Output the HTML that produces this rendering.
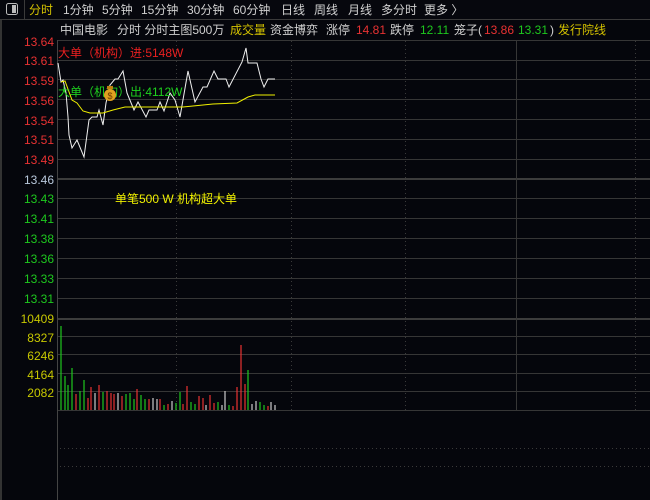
<!DOCTYPE html>
<html><head><meta charset="utf-8"><style>
html,body{margin:0;padding:0;background:#05060c;width:650px;height:500px;overflow:hidden}
svg{display:block}
text{font-family:"Liberation Sans","Noto Sans CJK SC",sans-serif;font-size:12px}
</style></head><body>
<svg width="650" height="500" viewBox="0 0 650 500" xmlns="http://www.w3.org/2000/svg">
<rect width="650" height="500" fill="#05060c"/>
<!-- top bar -->
<rect x="0" y="0" width="650" height="19" fill="#06070d"/>
<line x1="0" y1="19.5" x2="650" y2="19.5" stroke="#3a3a3a"/>
<line x1="24.5" y1="0" x2="24.5" y2="19" stroke="#3a3a3a"/>
<rect x="6.5" y="3.5" width="11" height="11" rx="2" fill="none" stroke="#bbb"/>
<rect x="12" y="5" width="4" height="8" fill="#bbb"/>
<text x="29" y="14" fill="#d4c200">分时</text>
<text x="63" y="14" fill="#d0d0d0">1分钟</text>
<text x="102" y="14" fill="#d0d0d0">5分钟</text>
<text x="141" y="14" fill="#d0d0d0">15分钟</text>
<text x="187" y="14" fill="#d0d0d0">30分钟</text>
<text x="233" y="14" fill="#d0d0d0">60分钟</text>
<text x="281" y="14" fill="#d0d0d0">日线</text>
<text x="314" y="14" fill="#d0d0d0">周线</text>
<text x="348" y="14" fill="#d0d0d0">月线</text>
<text x="381" y="14" fill="#d0d0d0">多分时</text>
<text x="424" y="14" fill="#d0d0d0">更多 〉</text>
<!-- left border -->
<rect x="0" y="20" width="2" height="480" fill="#333"/>
<line x1="57.5" y1="40" x2="57.5" y2="500" stroke="#444"/>
<!-- header row -->
<text x="60" y="34" fill="#d0d0d0">中国电影</text>
<text x="117" y="34" fill="#d0d0d0">分时 分时主图500万</text>
<text x="230" y="34" fill="#d4c200">成交量</text>
<text x="270" y="34" fill="#d0d0d0">资金博弈</text>
<text x="326" y="34" fill="#d0d0d0">涨停</text>
<text x="356" y="34" fill="#e83232">14.81</text>
<text x="390" y="34" fill="#d0d0d0">跌停</text>
<text x="420" y="34" fill="#1ec81e">12.11</text>
<text x="454" y="34" fill="#d0d0d0">笼子(</text>
<text x="484" y="34" fill="#e83232">13.86</text>
<text x="518" y="34" fill="#1ec81e">13.31</text>
<text x="550" y="34" fill="#d0d0d0">)</text>
<text x="558" y="34" fill="#d4c200">发行院线</text>
<!-- horizontal grid -->
<g stroke="#363636" stroke-width="1">
<line x1="58" y1="40.5" x2="650" y2="40.5"/>
<line x1="58" y1="60.5" x2="650" y2="60.5"/>
<line x1="58" y1="79.5" x2="650" y2="79.5"/>
<line x1="58" y1="99.5" x2="650" y2="99.5"/>
<line x1="58" y1="119.5" x2="650" y2="119.5"/>
<line x1="58" y1="139.5" x2="650" y2="139.5"/>
<line x1="58" y1="159.5" x2="650" y2="159.5"/>
<line x1="58" y1="198.5" x2="650" y2="198.5"/>
<line x1="58" y1="218.5" x2="650" y2="218.5"/>
<line x1="58" y1="238.5" x2="650" y2="238.5"/>
<line x1="58" y1="258.5" x2="650" y2="258.5"/>
<line x1="58" y1="278.5" x2="650" y2="278.5"/>
<line x1="58" y1="298.5" x2="650" y2="298.5"/>
<line x1="58" y1="336.5" x2="650" y2="336.5"/>
<line x1="58" y1="354.5" x2="650" y2="354.5"/>
<line x1="58" y1="373.5" x2="650" y2="373.5"/>
<line x1="58" y1="391.5" x2="650" y2="391.5"/>
<line x1="58" y1="410.5" x2="650" y2="410.5"/>
</g>
<rect x="58" y="178" width="592" height="2" fill="#3c3c3c"/>
<rect x="58" y="318" width="592" height="2" fill="#3c3c3c"/>
<g stroke="#3a3a3a" stroke-dasharray="1,3">
<line x1="176.5" y1="41" x2="176.5" y2="410"/>
<line x1="291.5" y1="41" x2="291.5" y2="410"/>
<line x1="405.5" y1="41" x2="405.5" y2="410"/>
<line x1="635.5" y1="41" x2="635.5" y2="410"/>
<line x1="60" y1="448.5" x2="650" y2="448.5"/>
<line x1="60" y1="466.5" x2="650" y2="466.5"/>
</g>
<line x1="516.5" y1="41" x2="516.5" y2="410" stroke="#363636"/>
<!-- price labels -->
<g text-anchor="end">
<text x="54" y="46" fill="#e83232">13.64</text>
<text x="54" y="65" fill="#e83232">13.61</text>
<text x="54" y="85" fill="#e83232">13.59</text>
<text x="54" y="105" fill="#e83232">13.56</text>
<text x="54" y="125" fill="#e83232">13.54</text>
<text x="54" y="144" fill="#e83232">13.51</text>
<text x="54" y="164" fill="#e83232">13.49</text>
<text x="54" y="184" fill="#b8c8dc">13.46</text>
<text x="54" y="203" fill="#1ec81e">13.43</text>
<text x="54" y="223" fill="#1ec81e">13.41</text>
<text x="54" y="243" fill="#1ec81e">13.38</text>
<text x="54" y="263" fill="#1ec81e">13.36</text>
<text x="54" y="283" fill="#1ec81e">13.33</text>
<text x="54" y="303" fill="#1ec81e">13.31</text>
<text x="54" y="323" fill="#c8c800">10409</text>
<text x="54" y="342" fill="#c8c800">8327</text>
<text x="54" y="360" fill="#c8c800">6246</text>
<text x="54" y="379" fill="#c8c800">4164</text>
<text x="54" y="397" fill="#c8c800">2082</text>
</g>
<!-- lines -->
<polyline fill="none" stroke="#f0f0f0" stroke-width="1" points="58,63 61,82 63,80 66,93 68,117 69,135 72,148 77,140 84,157 89,120 92,117 97,117 99,110 103,125 106,103 110,85 115,79 118,79 123,71 127,93 134,110 138,102 146,117 149,110 157,110 160,102 164,111 170,93 175,100 180,117 188,71 195,102 203,87 207,87 214,71 218,79 226,79 229,87 242,62 246,48 248,63 257,63 261,79 264,87 268,79 275,79"/>
<polyline fill="none" stroke="#f0f000" stroke-width="1" points="61,82 65,81 72,100 77,103 83,111 90,113 103,113 113,110 125,107 150,107 183,107 213,104 237,103 248,97 255,95 275,95"/>
<text x="58" y="57" fill="#e82020">大单（机构）进:5148W</text>
<text x="58" y="96" fill="#1ed21e">大单（机构）出:4112W</text>
<circle cx="110" cy="95" r="6" fill="#e0a020"/>
<rect x="107" y="86" width="6" height="3" fill="#c08010"/>
<text x="110" y="99" text-anchor="middle" fill="#6a3a00" style="font-size:9px">$</text>
<text x="115" y="203" fill="#f0f000">单笔500 W 机构超大单</text>
<!-- volume bars -->
<g stroke-width="1.2">
<line x1="61" y1="410" x2="61" y2="326" stroke="#1ec81e"/>
<line x1="65" y1="410" x2="65" y2="376" stroke="#1ec81e"/>
<line x1="68" y1="410" x2="68" y2="385" stroke="#1ec81e"/>
<line x1="72" y1="410" x2="72" y2="368" stroke="#1ec81e"/>
<line x1="76" y1="410" x2="76" y2="394" stroke="#e83232"/>
<line x1="80" y1="410" x2="80" y2="391" stroke="#1ec81e"/>
<line x1="84" y1="410" x2="84" y2="380" stroke="#1ec81e"/>
<line x1="88" y1="410" x2="88" y2="398" stroke="#e83232"/>
<line x1="91" y1="410" x2="91" y2="387" stroke="#e83232"/>
<line x1="95" y1="410" x2="95" y2="393" stroke="#cccccc"/>
<line x1="99" y1="410" x2="99" y2="385" stroke="#e83232"/>
<line x1="103" y1="410" x2="103" y2="392" stroke="#1ec81e"/>
<line x1="107" y1="410" x2="107" y2="391" stroke="#e83232"/>
<line x1="111" y1="410" x2="111" y2="393" stroke="#e83232"/>
<line x1="114" y1="410" x2="114" y2="394" stroke="#e83232"/>
<line x1="118" y1="410" x2="118" y2="393" stroke="#cccccc"/>
<line x1="122" y1="410" x2="122" y2="396" stroke="#e83232"/>
<line x1="126" y1="410" x2="126" y2="394" stroke="#1ec81e"/>
<line x1="130" y1="410" x2="130" y2="393" stroke="#1ec81e"/>
<line x1="134" y1="410" x2="134" y2="399" stroke="#1ec81e"/>
<line x1="137" y1="410" x2="137" y2="389" stroke="#e83232"/>
<line x1="141" y1="410" x2="141" y2="395" stroke="#1ec81e"/>
<line x1="145" y1="410" x2="145" y2="399" stroke="#1ec81e"/>
<line x1="149" y1="410" x2="149" y2="399" stroke="#e83232"/>
<line x1="153" y1="410" x2="153" y2="398" stroke="#cccccc"/>
<line x1="157" y1="410" x2="157" y2="399" stroke="#cccccc"/>
<line x1="160" y1="410" x2="160" y2="399" stroke="#e83232"/>
<line x1="164" y1="410" x2="164" y2="405" stroke="#1ec81e"/>
<line x1="168" y1="410" x2="168" y2="404" stroke="#e83232"/>
<line x1="172" y1="410" x2="172" y2="401" stroke="#cccccc"/>
<line x1="176" y1="410" x2="176" y2="403" stroke="#1ec81e"/>
<line x1="180" y1="410" x2="180" y2="392" stroke="#1ec81e"/>
<line x1="183" y1="410" x2="183" y2="404" stroke="#e83232"/>
<line x1="187" y1="410" x2="187" y2="386" stroke="#e83232"/>
<line x1="191" y1="410" x2="191" y2="402" stroke="#1ec81e"/>
<line x1="195" y1="410" x2="195" y2="404" stroke="#1ec81e"/>
<line x1="199" y1="410" x2="199" y2="396" stroke="#e83232"/>
<line x1="203" y1="410" x2="203" y2="398" stroke="#e83232"/>
<line x1="206" y1="410" x2="206" y2="405" stroke="#cccccc"/>
<line x1="210" y1="410" x2="210" y2="395" stroke="#e83232"/>
<line x1="214" y1="410" x2="214" y2="403" stroke="#e83232"/>
<line x1="218" y1="410" x2="218" y2="402" stroke="#1ec81e"/>
<line x1="222" y1="410" x2="222" y2="405" stroke="#cccccc"/>
<line x1="225" y1="410" x2="225" y2="391" stroke="#cccccc"/>
<line x1="229" y1="410" x2="229" y2="405" stroke="#1ec81e"/>
<line x1="233" y1="410" x2="233" y2="406" stroke="#e83232"/>
<line x1="237" y1="410" x2="237" y2="387" stroke="#e83232"/>
<line x1="241" y1="410" x2="241" y2="345" stroke="#e83232"/>
<line x1="245" y1="410" x2="245" y2="384" stroke="#e83232"/>
<line x1="248" y1="410" x2="248" y2="370" stroke="#1ec81e"/>
<line x1="252" y1="410" x2="252" y2="404" stroke="#cccccc"/>
<line x1="256" y1="410" x2="256" y2="401" stroke="#cccccc"/>
<line x1="260" y1="410" x2="260" y2="402" stroke="#1ec81e"/>
<line x1="264" y1="410" x2="264" y2="405" stroke="#1ec81e"/>
<line x1="268" y1="410" x2="268" y2="406" stroke="#e83232"/>
<line x1="271" y1="410" x2="271" y2="402" stroke="#cccccc"/>
<line x1="275" y1="410" x2="275" y2="405" stroke="#cccccc"/>
</g>
</svg>
</body></html>
